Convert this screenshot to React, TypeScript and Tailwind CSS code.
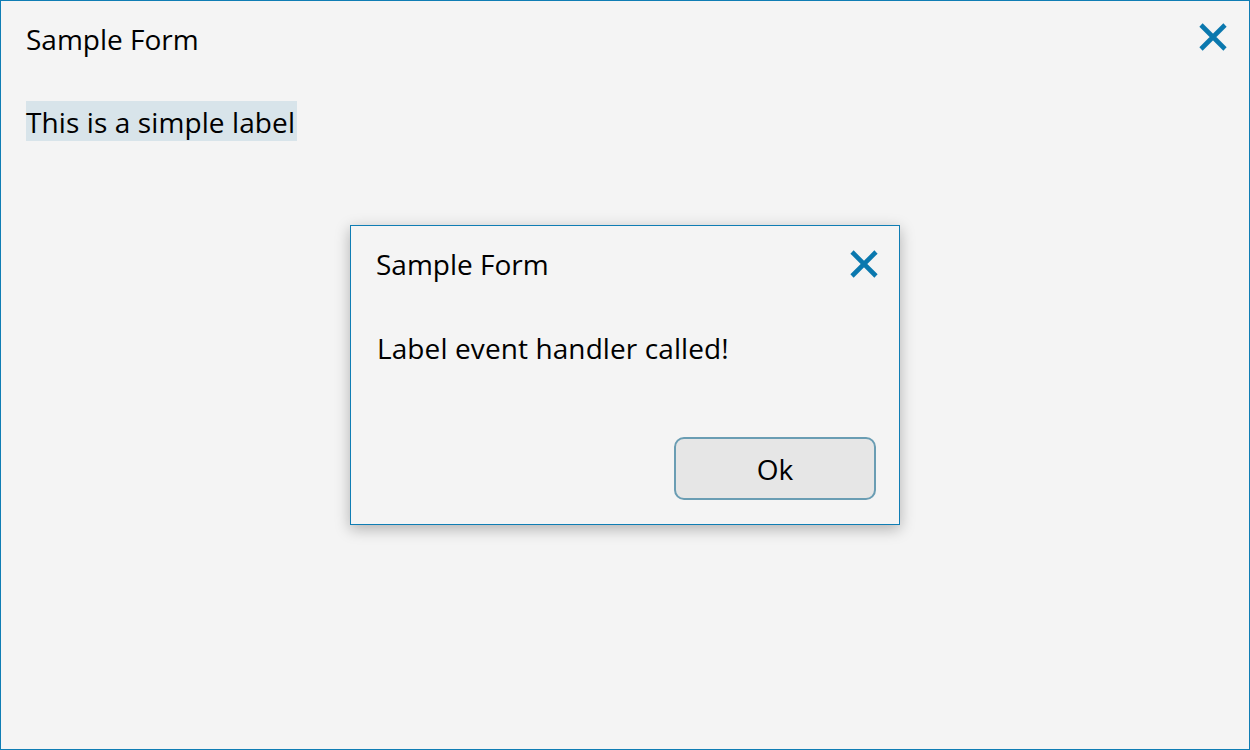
import React from "react";

function CloseX({ className }: { className?: string }) {
  return (
    <svg viewBox="0 0 28 28" className={className} fill="none">
      <path d="M2 2 L26 26 M26 2 L2 26" stroke="#0a78ae" strokeWidth="4.6" strokeLinecap="butt" />
    </svg>
  );
}

export default function App() {
  return (
    <div
      className="relative w-[1250px] h-[750px] bg-[#f4f4f4] border border-[#0f7db4] text-black overflow-hidden"
      style={{ fontFamily: '"Open Sans", "Noto Sans", sans-serif' }}
    >
      <div className="flex items-start justify-between pl-[25px] pr-[22px] pt-[19px]">
        <div className="text-[28px] leading-[38px]">Sample Form</div>
        <CloseX className="w-[28px] h-[28px] mt-[3px]" />
      </div>
      <div className="pl-[25px] mt-[43px]">
        <span className="inline-block bg-[#d8e4ea] text-[28px] leading-[38px] h-[40px] pt-[2px] pr-[2px] tracking-[0.1px]">
          This is a simple label
        </span>
      </div>

      <div className="absolute left-[349px] top-[224px] w-[550px] h-[300px] bg-[#f4f4f4] border border-[#0f7db4] shadow-[0_4px_14px_rgba(0,0,0,0.28)] flex flex-col">
        <div className="flex items-start justify-between pl-[25px] pr-[21px] pt-[19px]">
          <div className="text-[28px] leading-[38px]">Sample Form</div>
          <CloseX className="w-[28px] h-[28px] mt-[5px]" />
        </div>
        <div className="pl-[26px] mt-[46px] text-[28px] leading-[38px] tracking-[0.1px]">Label event handler called!</div>
        <div className="flex-1" />
        <div className="flex justify-end pr-[23px] pb-[24px]">
          <button className="w-[202px] h-[63px] rounded-[10px] border-2 border-[#6a9db3] bg-[#e6e6e6] text-[28px] leading-none text-black">
            Ok
          </button>
        </div>
      </div>
    </div>
  );
}
